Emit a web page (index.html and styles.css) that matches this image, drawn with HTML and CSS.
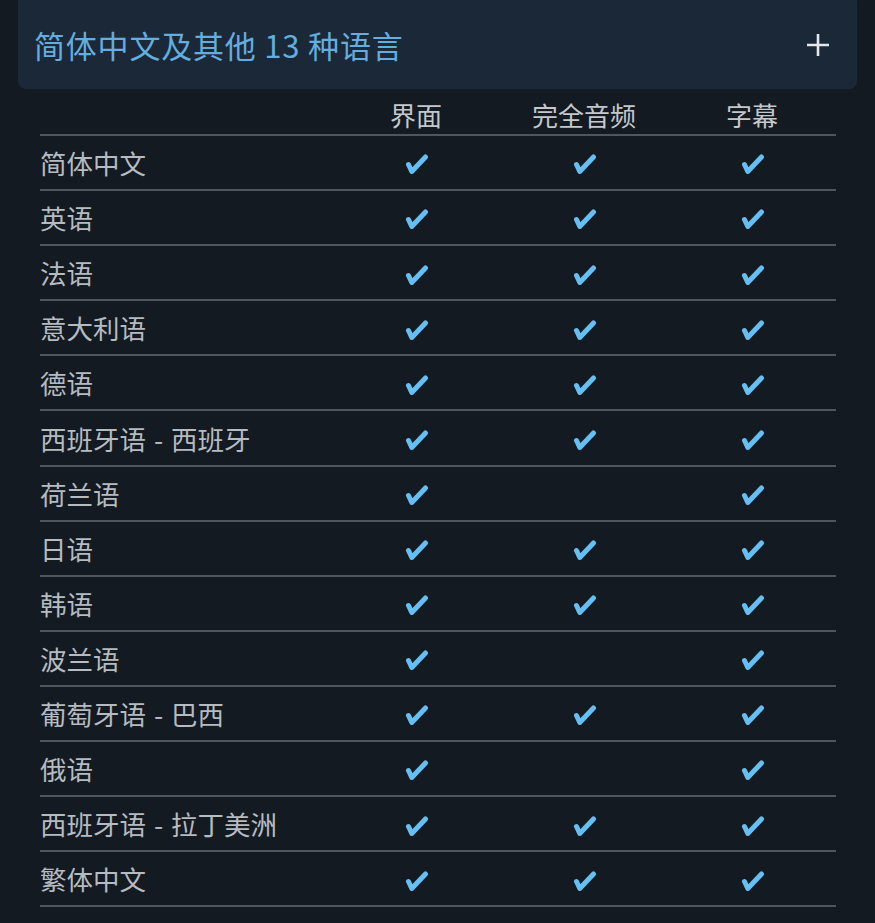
FILE: index.html
```html
<!DOCTYPE html>
<html lang="zh">
<head>
<meta charset="utf-8">
<link rel="stylesheet" href="styles.css">
</head>
<body>
<div class="page">
  <div class="lang-header">
    <span class="lang-title">简体中文及其他 13 种语言</span>
    <svg class="plus" width="24" height="24" viewBox="0 0 24 24"><path d="M12 1V23M1 12H23" stroke="#e4e8ec" stroke-width="2.6" fill="none"/></svg>
  </div>
  <table class="lang-table">
    <thead>
      <tr><th class="name-col"></th><th>界面</th><th>完全音频</th><th>字幕</th></tr>
    </thead>
    <tbody id="rows"></tbody>
  </table>
</div>
<script src="app.js"></script>
</body>
</html>
```
FILE: app.js
```js
const data = [
  ["简体中文",1,1,1],["英语",1,1,1],["法语",1,1,1],["意大利语",1,1,1],["德语",1,1,1],
  ["西班牙语 - 西班牙",1,1,1],["荷兰语",1,0,1],["日语",1,1,1],["韩语",1,1,1],["波兰语",1,0,1],
  ["葡萄牙语 - 巴西",1,1,1],["俄语",1,0,1],["西班牙语 - 拉丁美洲",1,1,1],["繁体中文",1,1,1]
];
const check = '<svg class="chk" width="26" height="22" viewBox="0 0 26 22"><path d="M5.5 11.5L8.8 18.5L22.5 4" stroke="#66bff3" stroke-width="5" stroke-linecap="round" stroke-linejoin="round" fill="none"/></svg>';
const tb = document.getElementById("rows");
tb.innerHTML = data.map(r => '<tr><td class="name">' + r[0] + '</td>' +
  [1,2,3].map(i => '<td class="c">' + (r[i] ? check : '') + '</td>').join('') + '</tr>').join('');
```
FILE: styles.css
```css
html, body {
  margin: 0;
  padding: 0;
  background: #131a22;
}
body {
  font-family: "Noto Sans CJK SC", "Noto Sans", sans-serif;
}
.page {
  width: 875px;
  height: 923px;
  overflow: hidden;
  position: relative;
}
.lang-header {
  margin: -6px 18px 0 18px;
  height: 95px;
  background: #1b2838;
  border-radius: 8px;
  display: flex;
  align-items: center;
  justify-content: space-between;
  padding: 6px 27px 0 16px;
  box-sizing: border-box;
}
.lang-title {
  color: #63addf;
  font-size: 31px;
  line-height: 1;
  letter-spacing: 0.8px;
}
.plus {
  display: block;
}
.lang-table {
  margin: 0 0 0 40px;
  width: 796px;
  border-collapse: collapse;
  table-layout: fixed;
}
.lang-table th {
  height: 46px;
  padding: 6px 0 0 0;
  box-sizing: border-box;
  font-weight: normal;
  color: #c4c8cc;
  font-size: 26px;
  text-align: center;
  border-bottom: 2px solid #4f565e;
  width: 168px;
  vertical-align: middle;
}
.lang-table th.name-col {
  width: 292px;
}
.lang-table td {
  height: 53.1px;
  padding: 0;
  border-bottom: 2px solid #4f565e;
  vertical-align: middle;
}
.lang-table td.name {
  color: #b6bbc0;
  font-size: 26.5px;
  text-align: left;
  white-space: nowrap;
  word-spacing: 2px;
}
.lang-table td.c {
  text-align: center;
}
.chk {
  display: inline-block;
  vertical-align: middle;
}
```
